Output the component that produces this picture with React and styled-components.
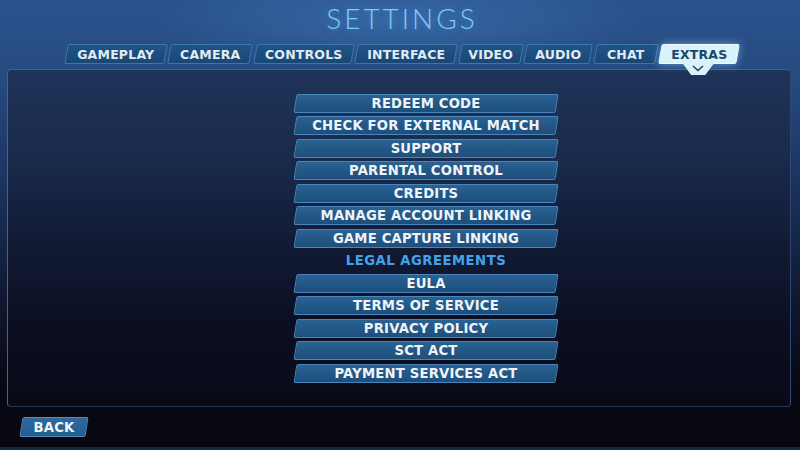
import React from "react"
import styled, { createGlobalStyle } from "styled-components"

const GlobalStyle = createGlobalStyle`
	html, body {
		margin: 0;
		padding: 0;
		background: #080812;
	}
	#root {
		width: 800px;
		height: 450px;
		overflow: hidden;
	}
`

const Screen = styled.div`
	width: 800px;
	height: 450px;
	display: flex;
	flex-direction: column;
	font-family: "DejaVu Sans", "Liberation Sans", sans-serif;
	background:
		radial-gradient(ellipse 360px 70px at 400px 20px, rgba(70, 130, 200, 0.45), transparent 70%),
		linear-gradient(180deg, #2a538c 0%, #264a80 18%, #1c3460 40%, #101a34 65%, #090914 85%, #070710 100%);
	box-sizing: border-box;
	border-bottom: 3px solid #14284a;
`

const Title = styled.h1`
	margin: 0;
	height: 37px;
	padding-top: 1px;
	box-sizing: border-box;
	text-align: center;
	font-family: "Lato", "Liberation Sans", sans-serif;
	font-weight: 300;
	font-size: 28px;
	letter-spacing: 3px;
	line-height: 34px;
	color: #7ccbf2;
	text-shadow: 0 0 6px rgba(90, 170, 240, 0.35);
	padding-left: 4px;
`

const TabRow = styled.div`
	display: flex;
	justify-content: center;
	gap: 3.5px;
	margin-top: 7px;
	height: 20px;
	padding-left: 4px;
	position: relative;
	z-index: 2;
`

const Tab = styled.div`
	position: relative;
	width: ${p => p.$w}px;
	height: 20px;
	display: flex;
	align-items: center;
	justify-content: center;
	font-size: 12.5px;
	font-weight: bold;
	letter-spacing: 0.2px;
	color: ${p => (p.$active ? "#1d4668" : "#e0ebf4")};

	&::before {
		content: "";
		position: absolute;
		inset: 0;
		transform: skewX(-10deg);
		border-radius: 2px;
		background: ${p => (p.$active ? "#d9f3fb" : "linear-gradient(180deg, #1f5486 0%, #194776 100%)")};
		border: 1px solid ${p => (p.$active ? "#eefaff" : "#3d76ab")};
		box-sizing: border-box;
		box-shadow: ${p => (p.$active ? "0 0 8px rgba(140, 210, 255, 0.6)" : "none")};
	}

	span {
		position: relative;
	}
`

const Notch = styled.div`
	position: absolute;
	left: 50%;
	top: 19px;
	width: 32px;
	height: 12px;
	margin-left: -17px;
	background: #d9f3fb;
	clip-path: polygon(0 0, 100% 0, 72% 100%, 28% 100%);
	display: flex;
	justify-content: center;
	padding-top: 2px;
	box-sizing: border-box;
`

const Panel = styled.div`
	margin: 5px 9px 0 7px;
	height: 338px;
	box-sizing: border-box;
	border: 1.5px solid #3d659c;
	border-bottom-color: #26365a;
	border-right-color: #2f4670;
	border-radius: 4px;
	background: linear-gradient(180deg, #1f3459 0%, #1a2b4c 25%, #121c36 50%, #0c0f22 75%, #0a0a17 100%);
	padding: 23.5px 0 0 54px;
	display: flex;
	flex-direction: column;
	align-items: center;
	gap: 3.5px;
`

const MenuButton = styled.div`
	position: relative;
	width: 262px;
	height: 19px;
	display: flex;
	align-items: center;
	justify-content: center;
	font-size: 13.2px;
	font-weight: bold;
	letter-spacing: 0.2px;
	color: #eef4fa;

	&::before {
		content: "";
		position: absolute;
		inset: 0;
		transform: skewX(-9deg);
		border-radius: 2px;
		background: linear-gradient(180deg, #2a6294 0%, #225784 55%, #1e4f7c 100%);
		border: 1px solid #4a86bb;
		box-sizing: border-box;
	}

	span {
		position: relative;
	}
`

const SectionLabel = styled.div`
	height: 19px;
	display: flex;
	align-items: center;
	justify-content: center;
	font-size: 13.2px;
	font-weight: bold;
	letter-spacing: 0.5px;
	color: #43a3ea;
`

const Footer = styled.div`
	display: flex;
	padding: 10px 0 0 21px;
`

const BackButton = styled(MenuButton)`
	width: 66px;
	height: 20px;
	&::before {
		background: linear-gradient(180deg, #2e6a9e 0%, #245c8c 100%);
		border-color: #4f8fc4;
	}
`

const tabs = [
	["GAMEPLAY", 100],
	["CAMERA", 82],
	["CONTROLS", 98],
	["INTERFACE", 100],
	["VIDEO", 62],
	["AUDIO", 66],
	["CHAT", 62],
	["EXTRAS", 78],
]

const items = [
	"REDEEM CODE",
	"CHECK FOR EXTERNAL MATCH",
	"SUPPORT",
	"PARENTAL CONTROL",
	"CREDITS",
	"MANAGE ACCOUNT LINKING",
	"GAME CAPTURE LINKING",
	{ label: "LEGAL AGREEMENTS" },
	"EULA",
	"TERMS OF SERVICE",
	"PRIVACY POLICY",
	"SCT ACT",
	"PAYMENT SERVICES ACT",
]

const App = () => {
	return (
		<Screen>
			<GlobalStyle />
			<Title>SETTINGS</Title>
			<TabRow>
				{tabs.map(([name, w]) => (
					<Tab key={name} $w={w} $active={name === "EXTRAS"}>
						<span>{name}</span>
						{name === "EXTRAS" && (
							<Notch>
								<svg width="12" height="7" viewBox="0 0 12 7">
									<path d="M1 1 L6 5.5 L11 1" fill="none" stroke="#1d4668" strokeWidth="1.6" />
								</svg>
							</Notch>
						)}
					</Tab>
				))}
			</TabRow>
			<Panel>
				{items.map((item, i) =>
					typeof item === "string" ? (
						<MenuButton key={i}><span>{item}</span></MenuButton>
					) : (
						<SectionLabel key={i}>{item.label}</SectionLabel>
					)
				)}
			</Panel>
			<Footer>
				<BackButton><span>BACK</span></BackButton>
			</Footer>
		</Screen>
	)
}

export default App
